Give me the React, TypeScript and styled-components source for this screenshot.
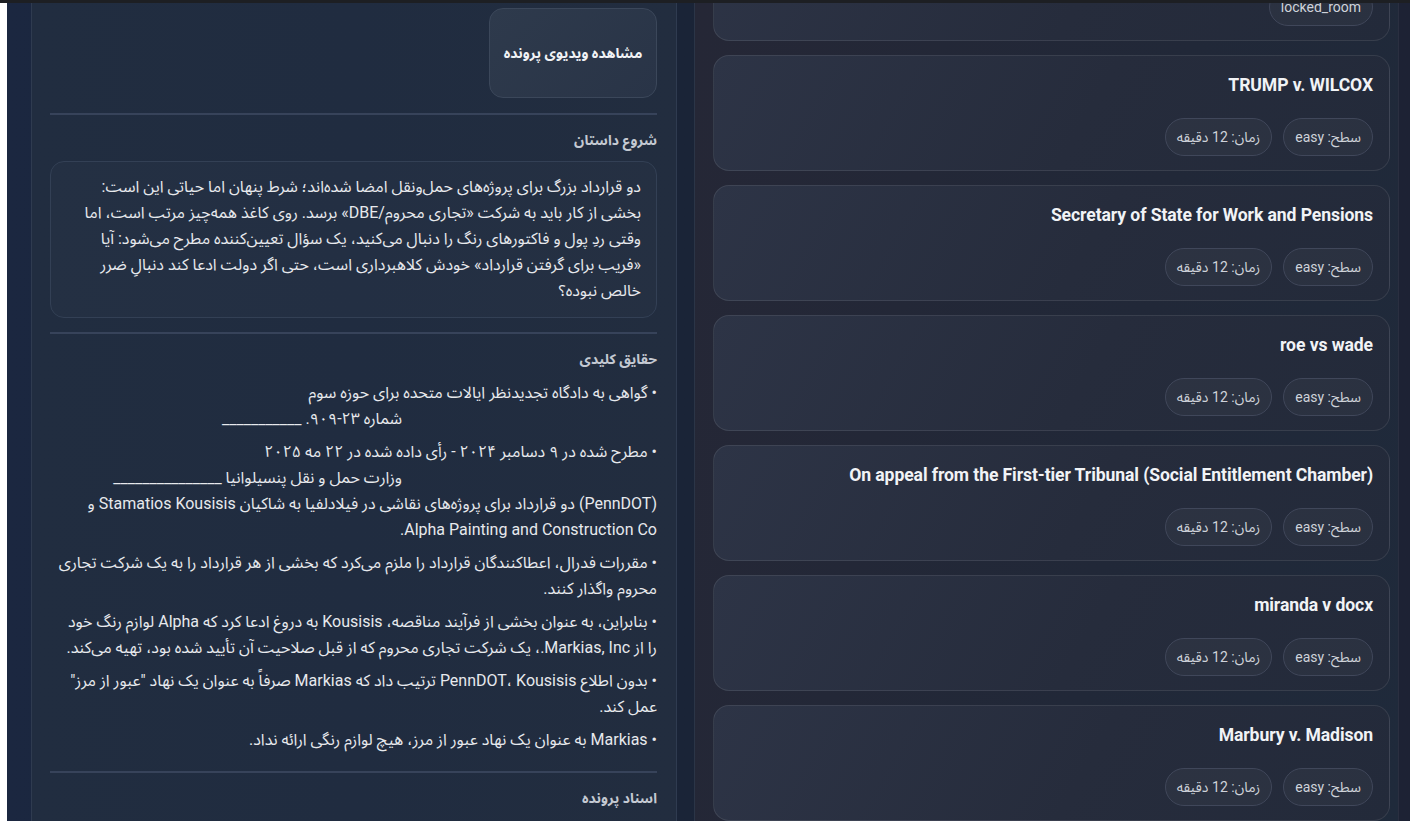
import React from 'react';
import styled, { createGlobalStyle } from 'styled-components';

const GlobalStyle = createGlobalStyle`
  html, body {
    margin: 0;
    padding: 0;
    background: #ffffff;
  }
  * {
    box-sizing: border-box;
  }
`;

const FONT = `Roboto, "Noto Sans Arabic", "DejaVu Sans", sans-serif`;

const Page = styled.div`
  height: 821px;
  overflow: hidden;
  border-top: 3px solid #1d1f23;
  padding-left: 7px;
  background: #ffffff;
  font-family: ${FONT};
`;

const Main = styled.main`
  height: 100%;
  direction: rtl;
  display: grid;
  grid-template-columns: 705px 646px;
  column-gap: 17px;
  padding: 0 11px 0 24px;
  background: linear-gradient(90deg, #1b2740 0%, #1a2437 48%, #1d2234 100%);
`;

const ListPanel = styled.section`
  height: 100%;
  overflow: hidden;
  padding: 0 8px 0 18px;
  border-left: 1px solid #2b3547;
  border-right: 1px solid #2a2f40;
  background: linear-gradient(100deg, #252736 0%, #212838 60%, #1f2a3b 100%);
`;

const CardList = styled.div`
  display: flex;
  flex-direction: column;
  gap: 14px;
  margin-top: -78px;
`;

const Card = styled.article`
  height: 116px;
  flex: none;
  padding: 17px 16px 15px;
  border-radius: 16px;
  border: 1px solid rgba(255, 255, 255, 0.09);
  background: linear-gradient(120deg, #2d3446 0%, #262c3c 55%, #232a3a 100%);
`;

const CardTitle = styled.h3`
  margin: 0;
  font-size: 17.6px;
  line-height: 24px;
  font-weight: 700;
  color: #f1f3f6;
  letter-spacing: -0.1px;
  white-space: nowrap;
`;

const ChipRow = styled.div`
  display: flex;
  gap: 11px;
  margin-top: 21px;
`;

const Chip = styled.span`
  height: 38px;
  display: inline-flex;
  align-items: center;
  padding: 0 11px;
  border-radius: 19px;
  border: 1px solid #40475a;
  background: rgba(255, 255, 255, 0.035);
  color: #cfd3da;
  font-size: 14px;
`;

const DetailPanel = styled.section`
  height: 100%;
  overflow: hidden;
  padding: 5px 19px 0 18px;
  border-left: 1px solid #2f3b50;
  border-right: 1px solid #2f3b50;
  background: linear-gradient(90deg, #212d40 0%, #202c40 50%, #222d3f 100%);
`;

const ActionRow = styled.div`
  display: flex;
`;

const VideoButton = styled.button`
  width: 168px;
  height: 90px;
  border-radius: 14px;
  border: 1px solid #3b475a;
  background: linear-gradient(135deg, #2e3a4c, #293447);
  color: #f1f3f6;
  font-family: ${FONT};
  font-size: 14px;
  font-weight: 700;
`;

const Divider = styled.hr<{ $top: number }>`
  margin: ${(p) => p.$top}px 0 0;
  border: none;
  height: 2px;
  background: #37435a;
`;

const SectionTitle = styled.h4`
  margin: 15px 0 0;
  font-size: 14px;
  line-height: 20px;
  font-weight: 700;
  color: #c4c9d2;
`;

const StoryBox = styled.div`
  margin-top: 11px;
  padding: 12px 15px 13px;
  border-radius: 14px;
  border: 1px solid #334055;
  background: rgba(255, 255, 255, 0.015);
  color: #e7e9ed;
  font-size: 16px;
  line-height: 26px;
`;

const FactList = styled.ul`
  margin: 11px 0 0;
  padding: 0;
  list-style: none;
  display: flex;
  flex-direction: column;
  gap: 7px;
`;

const Fact = styled.li`
  color: #e7e9ed;
  font-size: 16px;
  line-height: 26px;
`;

const Line = styled.span<{ $indent?: number }>`
  display: block;
  white-space: nowrap;
  padding-right: ${(p) => p.$indent ?? 0}px;
`;

const cases = [
  { title: '', chips: ['locked_room'] },
  { title: 'TRUMP v. WILCOX', chips: ['سطح: easy', 'زمان: 12 دقیقه'] },
  { title: 'Secretary of State for Work and Pensions', chips: ['سطح: easy', 'زمان: 12 دقیقه'] },
  { title: 'roe vs wade', chips: ['سطح: easy', 'زمان: 12 دقیقه'] },
  {
    title: 'On appeal from the First-tier Tribunal (Social Entitlement Chamber)',
    chips: ['سطح: easy', 'زمان: 12 دقیقه'],
  },
  { title: 'miranda v docx', chips: ['سطح: easy', 'زمان: 12 دقیقه'] },
  { title: 'Marbury v. Madison', chips: ['سطح: easy', 'زمان: 12 دقیقه'] },
];

const story = [
  'دو قرارداد بزرگ برای پروژه‌های حمل‌ونقل امضا شده‌اند؛ شرط پنهان اما حیاتی این است:',
  'بخشی از کار باید به شرکت «تجاری محروم/DBE» برسد. روی کاغذ همه‌چیز مرتب است، اما',
  'وقتی ردِ پول و فاکتورهای رنگ را دنبال می‌کنید، یک سؤال تعیین‌کننده مطرح می‌شود: آیا',
  '«فریب برای گرفتن قرارداد» خودش کلاهبرداری است، حتی اگر دولت ادعا کند دنبالِ ضرر',
  'خالص نبوده؟',
];

// each fact is a list of visual lines; indent pushes a continuation line in from the right
const facts: { text: string; indent?: number }[][] = [
  [
    { text: '• گواهی به دادگاه تجدیدنظر ایالات متحده برای حوزه سوم' },
    { text: 'شماره ۲۳-۹۰۹. ___________', indent: 255 },
  ],
  [
    { text: '• مطرح شده در ۹ دسامبر ۲۰۲۴ - رأی داده شده در ۲۲ مه ۲۰۲۵' },
    { text: 'وزارت حمل و نقل پنسیلوانیا _______________', indent: 255 },
    { text: '(PennDOT) دو قرارداد برای پروژه‌های نقاشی در فیلادلفیا به شاکیان Stamatios Kousisis و' },
    { text: 'Alpha Painting and Construction Co.' },
  ],
  [
    { text: '• مقررات فدرال، اعطاکنندگان قرارداد را ملزم می‌کرد که بخشی از هر قرارداد را به یک شرکت تجاری' },
    { text: 'محروم واگذار کنند.' },
  ],
  [
    { text: '• بنابراین، به عنوان بخشی از فرآیند مناقصه، Kousisis به دروغ ادعا کرد که Alpha لوازم رنگ خود' },
    { text: 'را از Markias, Inc.، یک شرکت تجاری محروم که از قبل صلاحیت آن تأیید شده بود، تهیه می‌کند.' },
  ],
  [
    { text: '• بدون اطلاع PennDOT، Kousisis ترتیب داد که Markias صرفاً به عنوان یک نهاد "عبور از مرز"' },
    { text: 'عمل کند.' },
  ],
  [{ text: '• Markias به عنوان یک نهاد عبور از مرز، هیچ لوازم رنگی ارائه نداد.' }],
];

const App: React.FunctionComponent = () => (
  <Page>
    <GlobalStyle />
    <Main>
      <ListPanel>
        <CardList>
          {cases.map((c, i) => (
            <Card key={i}>
              <CardTitle>{c.title || '\u00a0'}</CardTitle>
              <ChipRow>
                {c.chips.map((chip) => (
                  <Chip key={chip}>{chip}</Chip>
                ))}
              </ChipRow>
            </Card>
          ))}
        </CardList>
      </ListPanel>

      <DetailPanel>
        <ActionRow>
          <VideoButton>مشاهده ویدیوی پرونده</VideoButton>
        </ActionRow>

        <Divider $top={15} />
        <SectionTitle>شروع داستان</SectionTitle>
        <StoryBox>
          {story.map((l) => (
            <Line key={l}>{l}</Line>
          ))}
        </StoryBox>

        <Divider $top={14} />
        <SectionTitle>حقایق کلیدی</SectionTitle>
        <FactList>
          {facts.map((f, i) => (
            <Fact key={i}>
              {f.map((l) => (
                <Line key={l.text} $indent={l.indent}>
                  {l.text}
                </Line>
              ))}
            </Fact>
          ))}
        </FactList>

        <Divider $top={18} />
        <SectionTitle>اسناد پرونده</SectionTitle>
      </DetailPanel>
    </Main>
  </Page>
);

export default App;
